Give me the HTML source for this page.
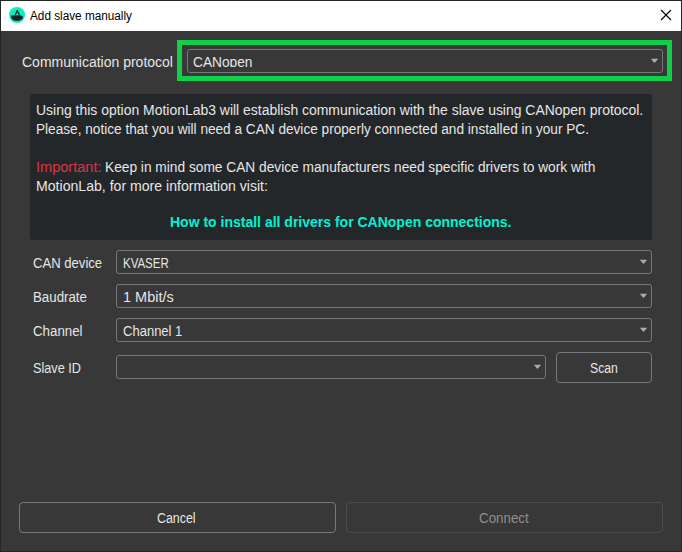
<!DOCTYPE html>
<html><head><meta charset="utf-8">
<style>
*{box-sizing:border-box;margin:0;padding:0}
html,body{width:682px;height:552px;overflow:hidden;background:#383838}
body{position:relative;font-family:"Liberation Sans",sans-serif;color:#e6e6e6}
.a{position:absolute}
.tx{position:absolute;white-space:pre;line-height:1;font-size:14px;transform-origin:0 0}
.cb{position:absolute;border:1px solid #76797c;border-radius:3px}
.btn{position:absolute;border:1px solid #76797c;border-radius:4px}
.ar{position:absolute}
</style></head><body>
<div class="a" style="left:0;top:0;width:682px;height:31px;background:#fff"></div>
<svg class="a" style="left:9px;top:7px" width="16" height="16" viewBox="0 0 16 16">
  <circle cx="8" cy="8" r="8" fill="#03f0c2"/>
  <path d="M2.2 8.4 L12.1 8.3 L12.7 9.3 L13.7 8.9 L13.9 11.1 Q12.6 13.3 10 13.7 Q7.5 14.1 5 13.4 Q2.7 12.6 2.2 10.5 Z" fill="#231f20"/>
  <path d="M6 8.6 L8.3 3.5 L10.6 8.5" stroke="#231f20" stroke-width="1.3" fill="none" stroke-linejoin="round"/>
</svg>
<div class="tx" style="left:30px;top:10px;font-size:12px;color:#000;transform:scaleX(0.98)">Add slave manually</div>
<svg class="a" style="left:660px;top:9px" width="12" height="12" viewBox="0 0 12 12">
  <path d="M1 1 L11 11 M11 1 L1 11" stroke="#000" stroke-width="1.1" fill="none"/>
</svg>

<div class="tx" style="left:22px;top:55px">Communication protocol</div>
<div class="a" style="left:177px;top:40px;width:495px;height:41px;border:5px solid #10d048"></div>
<div class="cb" style="left:187px;top:49px;width:476px;height:24px">
  <div class="a" style="left:5px;top:0;width:300px;height:17px;overflow:hidden"><div class="tx" style="left:0;top:5px;transform:scaleX(0.98)">CANopen</div></div>
</div>

<div class="a" style="left:30px;top:94px;width:622px;height:146px;background:#24272a;border-radius:3px"></div>
<div class="tx" style="left:36px;top:103px;transform:scaleX(0.9966)">Using this option MotionLab3 will establish communication with the slave using CANopen protocol.</div>
<div class="tx" style="left:36px;top:122px;transform:scaleX(0.9734)">Please, notice that you will need a CAN device properly connected and installed in your PC.</div>
<div class="tx" style="left:36px;top:160px;color:#dc3545;transform:scaleX(1.04)">Important:</div>
<div class="tx" style="left:105px;top:160px;transform:scaleX(0.98)">Keep in mind some CAN device manufacturers need specific drivers to work with</div>
<div class="tx" style="left:36px;top:179px;transform:scaleX(1.007)">MotionLab, for more information visit:</div>
<div class="tx" style="left:170px;top:215px;font-weight:bold;color:#00f2d2">How to install all drivers for CANopen connections.</div>

<div class="tx" style="left:33px;top:256px;transform:scaleX(0.935)">CAN device</div>
<div class="cb" style="left:116px;top:250px;width:536px;height:24px"></div>
<div class="tx" style="left:123px;top:256px;transform:scaleX(0.82)">KVASER</div>

<div class="tx" style="left:33px;top:290px;transform:scaleX(0.949)">Baudrate</div>
<div class="cb" style="left:116px;top:284px;width:536px;height:24px"></div>
<div class="tx" style="left:123px;top:290px;transform:scaleX(1.035)">1 Mbit/s</div>

<div class="tx" style="left:33px;top:324px;transform:scaleX(0.95)">Channel</div>
<div class="cb" style="left:116px;top:318px;width:536px;height:24px"></div>
<div class="tx" style="left:123px;top:324px;transform:scaleX(0.93)">Channel 1</div>

<div class="tx" style="left:33px;top:361px;transform:scaleX(0.908)">Slave ID</div>
<div class="cb" style="left:116px;top:355px;width:430px;height:24px"></div>

<div class="btn" style="left:556px;top:352px;width:96px;height:31px"></div>
<div class="tx" style="left:590px;top:361px;transform:scaleX(0.874)">Scan</div>

<div class="btn" style="left:19px;top:502px;width:317px;height:31px"></div>
<div class="tx" style="left:157px;top:511px;transform:scaleX(0.886)">Cancel</div>
<div class="btn" style="left:346px;top:502px;width:317px;height:31px;border-color:#4d4d4d"></div>
<div class="tx" style="left:479px;top:511px;transform:scaleX(0.953);color:#8f8f8f">Connect</div>

<svg class="ar" style="left:650px;top:58px" width="10" height="6" viewBox="0 0 10 6"><path d="M0.8 0.8 H8.2 L4.5 5 Z" fill="#adadad"/></svg>
<svg class="ar" style="left:639px;top:259px" width="10" height="6" viewBox="0 0 10 6"><path d="M0.8 0.8 H8.2 L4.5 5 Z" fill="#adadad"/></svg>
<svg class="ar" style="left:639px;top:293px" width="10" height="6" viewBox="0 0 10 6"><path d="M0.8 0.8 H8.2 L4.5 5 Z" fill="#adadad"/></svg>
<svg class="ar" style="left:639px;top:327px" width="10" height="6" viewBox="0 0 10 6"><path d="M0.8 0.8 H8.2 L4.5 5 Z" fill="#adadad"/></svg>
<svg class="ar" style="left:533px;top:364px" width="10" height="6" viewBox="0 0 10 6"><path d="M0.8 0.8 H8.2 L4.5 5 Z" fill="#adadad"/></svg>
<div class="a" style="left:0;top:0;width:682px;height:552px;border:1px solid #262626"></div>
</body></html>
